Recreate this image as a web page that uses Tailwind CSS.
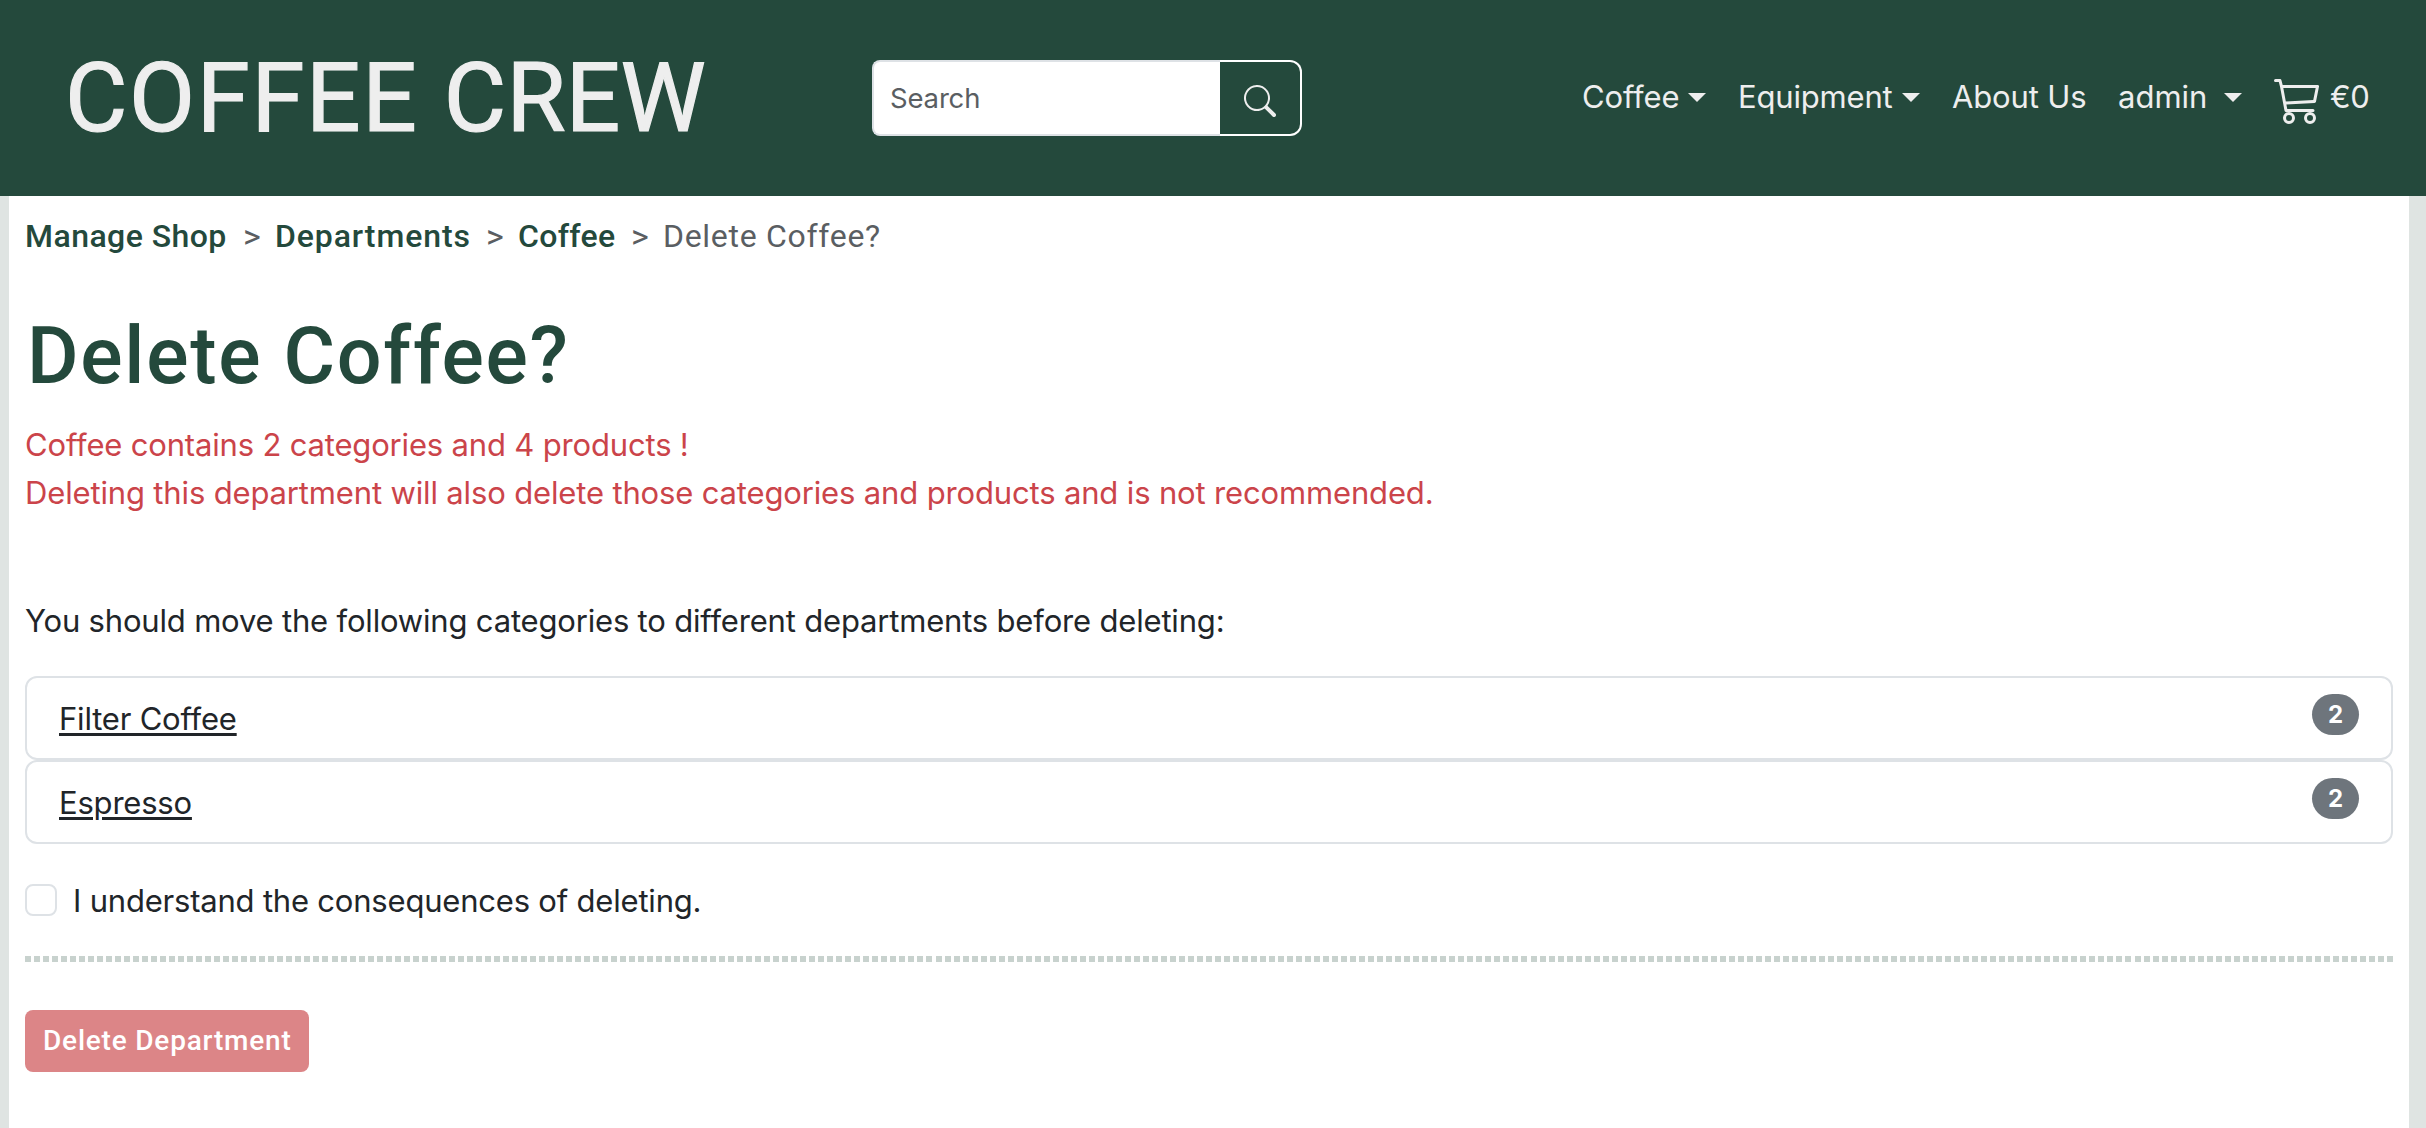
<!DOCTYPE html>
<html lang="en">
<head>
<meta charset="utf-8">
<title>Delete Coffee? | Coffee Crew</title>
<script src="https://cdn.jsdelivr.net/npm/@tailwindcss/browser@4"></script>
</head>
<body class="h-[1128px] overflow-hidden bg-[#dfe4e2] font-['Inter',sans-serif] text-[31px] leading-[48px] tracking-[-0.17px] text-[#212529]">
  <header class="flex h-[196px] items-center bg-[#24493c] pl-16 text-[#eeeeee]">
    <a class="w-[808px] pl-px font-['Roboto',sans-serif] text-[96px] leading-[144px] tracking-[1.6px] whitespace-nowrap [-webkit-text-stroke:1.2px_#eeeeee]">COFFEE <span class="tracking-[0.2px]">CREW</span></a>
    <form class="flex h-[76px] w-[430px]">
      <div class="flex flex-1 items-center rounded-l-lg border-2 border-r-0 border-[#dee2e6] bg-white pl-4 text-[27.5px] text-[#5a5e62]">Search</div>
      <button type="button" class="flex w-[82px] items-center rounded-r-xl border-2 border-l-0 border-white pt-1.5 pl-6" aria-label="Search">
        <svg class="size-8" viewBox="0 0 16 16" fill="currentColor"><path d="M11.742 10.344a6.500 6.500 0 1 0-1.397 1.398h-.001q.044.060.098.115l3.850 3.850a1 1 0 0 0 1.415-1.414l-3.850-3.850a1 1 0 0 0-.115-.100zM12 6.500a5.500 5.500 0 1 1-11 0 5.500 5.500 0 0 1 11 0"/></svg>
      </button>
    </form>
    <nav class="ml-auto flex items-center gap-8 pr-14 pb-0.5 whitespace-nowrap">
      <a class="flex w-[124px] items-center justify-between tracking-[-0.15px]">Coffee<svg class="h-[9px] w-[18px]" viewBox="0 0 18 9" fill="currentColor"><path d="M0 0h18L9 9z"/></svg></a>
      <a class="flex w-[182px] items-center justify-between">Equipment<svg class="h-[9px] w-[18px]" viewBox="0 0 18 9" fill="currentColor"><path d="M0 0h18L9 9z"/></svg></a>
      <a class="w-[134px] tracking-[-0.15px]">About Us</a>
      <a class="flex w-[124px] items-center justify-between tracking-[0px]">admin<svg class="h-[9px] w-[18px]" viewBox="0 0 18 9" fill="currentColor"><path d="M0 0h18L9 9z"/></svg></a>
      <a class="flex w-24 items-center gap-2 tracking-[-0.5px]">
        <svg class="mt-1.5 size-12 shrink-0" viewBox="0 0 16 16" fill="currentColor"><path d="M0 1.5A.5.5 0 0 1 .5 1H2a.5.5 0 0 1 .485.379L2.890 3H14.500a.5.5 0 0 1 .490.598l-1 5a.5.5 0 0 1-.465.401l-9.397.472L4.415 11H13a.5.5 0 0 1 0 1H4a.5.5 0 0 1-.491-.408L2.010 3.607 1.610 2H.5a.5.5 0 0 1-.5-.5M3.102 4l.840 4.479 9.144-.459L13.890 4zM5 12a2 2 0 1 0 0 4 2 2 0 0 0 0-4m7 0a2 2 0 1 0 0 4 2 2 0 0 0 0-4m-7 1a1 1 0 1 1 0 2 1 1 0 0 1 0-2m7 0a1 1 0 1 1 0 2 1 1 0 0 1 0-2"/></svg>
        <span>€0</span>
      </a>
    </nav>
  </header>

  <main class="ml-[9px] h-[932px] w-[2400px] bg-white px-4 pt-4">
    <nav class="flex font-['Roboto',sans-serif] text-[32px] whitespace-nowrap">
      <a class="w-[218px] font-medium tracking-[0.45px] text-[#24493c]">Manage Shop</a>
      <span class="w-8 text-[34px] text-[#5a5e62]">&gt;</span>
      <a class="w-[211px] font-medium tracking-[0.9px] text-[#24493c]">Departments</a>
      <span class="w-8 text-[34px] text-[#5a5e62]">&gt;</span>
      <a class="w-[113px] font-medium tracking-[0.3px] text-[#24493c]">Coffee</a>
      <span class="w-8 text-[34px] text-[#5a5e62]">&gt;</span>
      <span class="tracking-[0.7px] text-[#5a5e62]">Delete Coffee?</span>
    </nav>

    <h1 class="mt-[48px] pl-0.5 font-['Roboto',sans-serif] text-[79px] leading-[96px] font-medium tracking-[1.7px] text-[#24493c]">Delete Coffee?</h1>
    <p class="mt-[17px] text-[#cb444a]">Coffee contains 2 categories and 4 products !<br><span class="tracking-[-0.15px]">Deleting this department will also delete those categories and products and is not recommended.</span></p>
    <p class="mt-20 tracking-[-0.18px]">You should move the following categories to different departments before deleting:</p>

    <ul class="mt-[31px]">
      <li class="flex h-[84px] items-start justify-between rounded-xl border-2 border-[#dee2e6] px-8 pt-4">
        <a class="mt-px tracking-[-0.2px] underline decoration-3 underline-offset-[3px]">Filter Coffee</a>
        <span class="flex h-[41px] w-[47px] items-center justify-center rounded-full bg-[#6e757c] text-2xl font-bold text-white">2</span>
      </li>
      <li class="flex h-[84px] items-start justify-between rounded-xl border-2 border-[#dee2e6] px-8 pt-4">
        <a class="mt-px tracking-[-0.2px] underline decoration-3 underline-offset-[3px]">Espresso</a>
        <span class="flex h-[41px] w-[47px] items-center justify-center rounded-full bg-[#6e757c] text-2xl font-bold text-white">2</span>
      </li>
    </ul>

    <label class="mt-8 flex items-start gap-4">
      <input type="checkbox" class="mt-2 size-8 appearance-none rounded-lg border-2 border-[#dee2e6] bg-white">
      <span class="pt-px tracking-[-0.2px]">I understand the consequences of deleting.</span>
    </label>
    <div class="mt-[31px] h-1.5 bg-[repeating-linear-gradient(90deg,#c8d2ce_0_6px,transparent_6px_9.015px)]"></div>
    <button type="button" disabled class="mt-12 block h-[62px] w-[284px] rounded-lg bg-[#dc8587] pl-[18px] text-left font-['Roboto',sans-serif] text-[28px] font-medium tracking-[0.8px] text-white">Delete Department</button>
  </main>
</body>
</html>
